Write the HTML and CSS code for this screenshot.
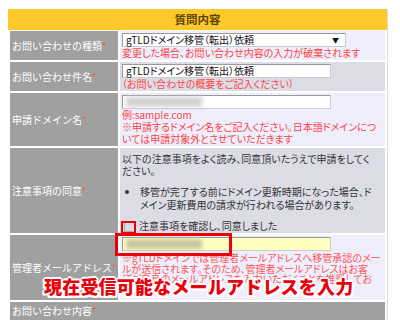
FILE: index.html
```html
<!DOCTYPE html>
<html lang="ja">

<head>
    <meta charset="UTF-8">
    <title>質問内容</title>
    <link rel="stylesheet" href="styles.css">
</head>

<body>
    <div class="box">
        <div class="box-title">質問内容</div>
        <table class="form-table">
            <tr class="odd">
                <th>お問い合わせの種類<span class="req">*</span></th>
                <td>
                    <div class="field select">gTLDドメイン移管（転出）依頼<span class="arrow">▼</span></div>
                    <p class="note">変更した場合、お問い合わせ内容の入力が破棄されます</p>
                </td>
            </tr>
            <tr class="even">
                <th>お問い合わせ件名<span class="req">*</span></th>
                <td>
                    <div class="field">gTLDドメイン移管（転出）依頼</div>
                    <p class="note">（お問い合わせの概要をご記入ください）</p>
                </td>
            </tr>
            <tr class="odd">
                <th>申請ドメイン名<span class="req">*</span></th>
                <td>
                    <div class="field"><span class="blur"></span></div>
                    <p class="note">例:sample.com<br>※申請するドメイン名をご記入ください。日本語ドメインにつ<br>いては申請対象外とさせていただきます</p>
                </td>
            </tr>
            <tr class="even">
                <th>注意事項の同意<span class="req">*</span></th>
                <td class="agree">
                    <p>以下の注意事項をよく読み、同意頂いたうえで申請をしてく<br>ださい。</p>
                    <ul>
                        <li>移管が完了する前にドメイン更新時期になった場合、ド<br>メイン更新費用の請求が行われる場合があります。</li>
                    </ul>
                    <label class="check"><span class="checkbox"></span>注意事項を確認し、同意しました</label>
                </td>
            </tr>
            <tr class="odd">
                <th>管理者メールアドレス<span class="req">*</span></th>
                <td>
                    <div class="field yellow"><span class="blur"></span></div>
                    <p class="note mail">※gTLDドメインでは管理者メールアドレスへ移管承認のメー<br>ルが送信されます。そのため、管理者メールアドレスはお客<br>様ご自身のメールアドレスを入力いただくことを推奨してお<br>ります。</p>
                </td>
            </tr>
            <tr class="last">
                <th colspan="2">お問い合わせ内容<span class="req">*</span></th>
            </tr>
        </table>

        <!-- annotations -->
        <div class="mark mark-check"></div>
        <div class="mark mark-mail"></div>
        <div class="callout">現在受信可能なメールアドレスを入力</div>
    </div>
</body>

</html>
```

FILE: styles.css
```css
body {
    margin: 0;
    background-color: #fff;
    font-family: "Noto Sans CJK JP", "Liberation Sans", sans-serif;
    font-size: 10px;
    color: #333;
}

.box {
    position: relative;
    margin: 9px 0 0 8px;
    width: 379px;
    border-right: 1px solid #ddd;
}

.box-title {
    height: 21px;
    line-height: 21px;
    background-color: #ffc82a;
    color: #5c4300;
    font-weight: bold;
    font-size: 11.5px;
    text-align: center;
}

.form-table {
    width: 100%;
    table-layout: fixed;
    border-spacing: 2px;
    margin-top: -1px;
}

.form-table th {
    width: 104px;
    padding: 0 2px;
    background-color: #a0a0a0;
    color: #fff;
    font-weight: normal;
    text-align: left;
    line-height: 12px;
    white-space: nowrap;
}

.form-table td {
    padding: 2px 2px 1px;
    vertical-align: top;
    line-height: 12px;
    white-space: nowrap;
    font-feature-settings: "palt";
}

.odd td {
    background-color: #eeeefc;
}

.even td {
    background-color: #dcdce6;
}

.req {
    color: #f55;
}

.field {
    position: relative;
    box-sizing: border-box;
    width: 209px;
    height: 14px;
    padding: 0 3px;
    background-color: #fff;
    border: 1px solid #999;
    border-right-color: #ccc;
    border-bottom-color: #ccc;
    line-height: 12px;
    color: #111;
    font-size: 10px;
}

.select {
    width: 224px;
}

.arrow {
    position: absolute;
    right: 6px;
    top: 0;
    font-size: 7px;
}

.yellow {
    background-color: #ffffc0;
}

.blur {
    display: block;
    width: 76px;
    height: 10px;
    margin-top: 1px;
    background-color: #d2d2d2;
    filter: blur(2px);
}

.yellow .blur {
    background-color: #c8c8a0;
}

.note {
    margin: 0;
    color: #f44;
}

.note.mail {
    margin: 2px 0 4px;
    line-height: 10.5px;
    color: #f55;
}

.agree p {
    margin: 3px 0 9px;
}

.agree ul {
    margin: 0 0 9px;
    padding-left: 18px;
    line-height: 12.5px;
}

.check {
    display: flex;
    align-items: center;
    gap: 4px;
    padding-left: 2px;
}

.checkbox {
    width: 9px;
    height: 9px;
    background-color: #ddd;
    border: 1px solid #aaa;
}

.last th {
    height: 20px;
    vertical-align: top;
    padding-top: 3px;
}

.mark {
    position: absolute;
    border: 2px solid #e8000c;
}

.mark-check {
    left: 113px;
    top: 212px;
    width: 11px;
    height: 9px;
}

.mark-mail {
    left: 107px;
    top: 224px;
    width: 111px;
    height: 17px;
    border-width: 3px;
}

.callout {
    position: absolute;
    left: 36px;
    top: 264px;
    font-size: 18px;
    font-weight: 900;
    color: #e8000c;
    letter-spacing: 0.2px;
    white-space: nowrap;
    text-shadow: 1px 1px 0 #fff, -1px -1px 0 #fff, 1px -1px 0 #fff, -1px 1px 0 #fff, 0 2px 0 #fff, 2px 0 0 #fff, 0 -2px 0 #fff, -2px 0 0 #fff, 2px 2px 0 #fff, -2px 2px 0 #fff;
}
```
